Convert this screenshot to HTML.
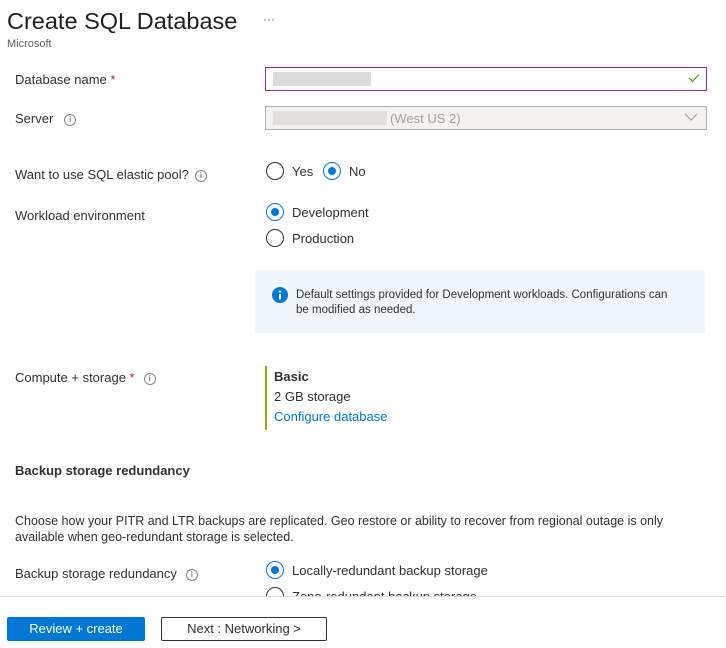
<!DOCTYPE html>
<html><head><style>
*{margin:0;padding:0;box-sizing:border-box}
body{width:726px;height:648px;overflow:hidden;background:#fff;font-family:"Liberation Sans",sans-serif;color:#323130;font-size:13px;position:relative}
.a{position:absolute;white-space:nowrap}
.lbl{line-height:16px}
.info{display:inline-block;width:12px;height:12px;border:1px solid #8a8886;border-radius:50%;font-size:8px;line-height:10px;text-align:center;color:#8a8886;vertical-align:1px;margin-left:6px;font-weight:bold}
.r{position:absolute;width:18px;height:18px;border:1px solid #323130;border-radius:50%;background:#fff}
.r.on{border-color:#0078d4}
.r.on::after{content:"";position:absolute;left:4px;top:4px;width:8px;height:8px;border-radius:50%;background:#0078d4}
.req{color:#a4262c}
</style></head><body>
<div class="a" style="left:7px;top:6px;font-size:23.5px;line-height:30px;color:#201f1e">Create SQL Database</div>
<div class="a" style="left:263px;top:12px;font-size:12px;color:#605e5c">···</div>
<div class="a" style="left:7px;top:38px;font-size:11px;color:#605e5c">Microsoft</div>

<div class="a lbl" style="left:15px;top:72px">Database name <span class="req">*</span></div>
<div class="a" style="left:265px;top:67px;width:442px;height:24px;border:1px solid #8a2da5;background:#fff"></div>
<div class="a" style="left:273px;top:72px;width:98px;height:14px;background:#dcdcdc"></div>
<svg class="a" style="left:688px;top:73px" width="12" height="10"><path d="M1 5 L4.5 8.5 L11 1.5" stroke="#57a300" fill="none" stroke-width="1.2"/></svg>

<div class="a lbl" style="left:15px;top:111px">Server<span class="info" style="margin-left:11px">i</span></div>
<div class="a" style="left:265px;top:106px;width:442px;height:24px;border:1px solid #b3b0ad;background:#f3f2f1"></div>
<div class="a" style="left:273px;top:111px;width:114px;height:14px;background:#e1e0df"></div>
<div class="a lbl" style="left:390px;top:111px;color:#a19f9d">(West US 2)</div>
<svg class="a" style="left:684px;top:113px" width="14" height="9"><path d="M1 1 L7 7 L13 1" stroke="#a19f9d" fill="none" stroke-width="1.2"/></svg>

<div class="a lbl" style="left:15px;top:167px">Want to use SQL elastic pool?<span class="info">i</span></div>
<div class="r" style="left:266px;top:162px"></div>
<div class="a lbl" style="left:292px;top:164px">Yes</div>
<div class="r on" style="left:323px;top:162px"></div>
<div class="a lbl" style="left:349px;top:164px">No</div>

<div class="a lbl" style="left:15px;top:208px">Workload environment</div>
<div class="r on" style="left:266px;top:203px"></div>
<div class="a lbl" style="left:292px;top:205px">Development</div>
<div class="r" style="left:266px;top:229px"></div>
<div class="a lbl" style="left:292px;top:231px">Production</div>

<div class="a" style="left:255px;top:270px;width:450px;height:63px;background:#eff6fc"></div>
<svg class="a" style="left:272px;top:287px" width="16" height="16"><circle cx="8" cy="8" r="8" fill="#0078d4"/><rect x="7" y="7" width="2" height="5.5" fill="#fff"/><circle cx="8" cy="4.6" r="1.2" fill="#fff"/></svg>
<div class="a" style="left:296px;top:288px;font-size:11.5px;line-height:15px;color:#323130">Default settings provided for Development workloads. Configurations can<br>be modified as needed.</div>

<div class="a lbl" style="left:15px;top:370px">Compute + storage <span class="req">*</span><span class="info" style="margin-left:9px">i</span></div>
<div class="a" style="left:265px;top:366px;width:2px;height:64px;background:#7fba00"></div>
<div class="a lbl" style="left:274px;top:369px;font-weight:bold">Basic</div>
<div class="a lbl" style="left:274px;top:389px">2 GB storage</div>
<div class="a lbl" style="left:274px;top:409px;color:#0078d4">Configure database</div>

<div class="a lbl" style="left:15px;top:463px;font-weight:bold;color:#323130">Backup storage redundancy</div>
<div class="a" style="left:15px;top:513px;font-size:12.5px;line-height:16px">Choose how your PITR and LTR backups are replicated. Geo restore or ability to recover from regional outage is only<br>available when geo-redundant storage is selected.</div>

<div class="a lbl" style="left:15px;top:566px">Backup storage redundancy<span class="info" style="margin-left:9px">i</span></div>
<div class="r on" style="left:266px;top:561px"></div>
<div class="a lbl" style="left:292px;top:563px">Locally-redundant backup storage</div>
<div class="r" style="left:266px;top:587px"></div>
<div class="a lbl" style="left:292px;top:589px">Zone-redundant backup storage</div>

<div class="a" style="left:0;top:596px;width:726px;height:52px;background:#fff;border-top:1px solid #e1dfdd"></div>
<div class="a" style="left:7px;top:617px;width:138px;height:24px;background:#0078d4;border-radius:2px;color:#fff;text-align:center;line-height:24px">Review + create</div>
<div class="a" style="left:161px;top:617px;width:166px;height:24px;border:1px solid #323130;border-radius:2px;text-align:center;line-height:22px">Next : Networking &gt;</div>
</body></html>
